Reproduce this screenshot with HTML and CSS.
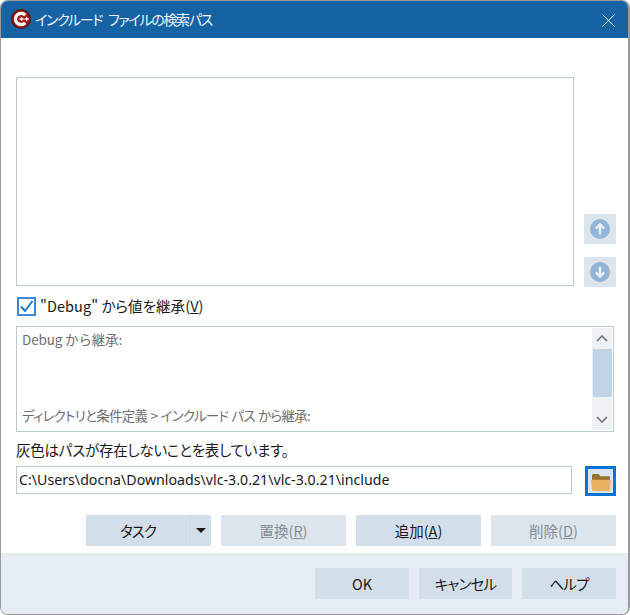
FILE: index.html
```html
<!DOCTYPE html>
<html lang="ja">
<head>
<meta charset="utf-8">
<title>インクルード ファイルの検索パス</title>
<link rel="stylesheet" href="styles.css">
</head>
<body>
<div class="window">
  <header class="titlebar">
    <svg class="appicon" width="20" height="20" viewBox="0 0 20 20">
      <circle cx="10" cy="10" r="10" fill="#5a1512"/>
      <circle cx="10" cy="10" r="8.6" fill="#a3201c"/>
      <path d="M14.2 6.2A5.6 5.6 0 1 0 14.2 13.8" fill="none" stroke="#fff" stroke-width="3.2"/>
      <path d="M8.6 10h4M10.6 8.2v3.6M13.6 10h4M15.6 8.2v3.6" stroke="#fff" stroke-width="1.3" fill="none"/>
    </svg>
    <span class="title">インクルード ファイルの検索パス</span>
    <svg class="close" width="13" height="13" viewBox="0 0 13 13"><path d="M.5.5l12 12M12.500.5l-12 12" stroke="#fff" stroke-width="1" fill="none"/></svg>
  </header>
  <main class="content">
    <div class="list-row">
      <div class="listbox"></div>
      <div class="arrows">
        <button class="arrow" type="button">
          <svg width="20" height="20" viewBox="0 0 20 20"><circle cx="10" cy="10" r="10" fill="#92b4d6"/><path d="M10 15.500V5.500M5.800 9.600L10 5.400l4.200 4.200" stroke="#e6eef6" stroke-width="2.400" fill="none"/></svg>
        </button>
        <button class="arrow" type="button">
          <svg width="20" height="20" viewBox="0 0 20 20"><circle cx="10" cy="10" r="10" fill="#92b4d6"/><path d="M10 4.500V14.500M5.800 10.400l4.200 4.200 4.200-4.200" stroke="#e6eef6" stroke-width="2.400" fill="none"/></svg>
        </button>
      </div>
    </div>
    <label class="inherit">
      <svg class="check" width="19" height="19" viewBox="0 0 19 19"><rect x="1" y="1" width="17" height="17" fill="#fff" stroke="#3a8ad6" stroke-width="2"/><path d="M4 9.500l4 4.500 7.500-10" fill="none" stroke="#1c78cc" stroke-width="2"/></svg>
      <span>"Debug" から値を継承(<u>V</u>)</span>
    </label>
    <div class="inherited">
      <div class="inherited-text">
        <div class="from-debug">Debug から継承:</div>
        <div class="from-dir">ディレクトリと条件定義 &gt; インクルード パス から継承:</div>
      </div>
      <div class="scrollbar">
        <svg width="12" height="7" viewBox="0 0 12 7"><path d="M1 6l5-5 5 5" fill="none" stroke="#6b6f74" stroke-width="1.500"/></svg>
        <div class="thumb"></div>
        <svg width="12" height="7" viewBox="0 0 12 7"><path d="M1 1l5 5 5-5" fill="none" stroke="#6b6f74" stroke-width="1.500"/></svg>
      </div>
    </div>
    <p class="note">灰色はパスが存在しないことを表しています。</p>
    <div class="path-row">
      <div class="pathinput">C:\Users\docna\Downloads\vlc-3.0.21\vlc-3.0.21\include</div>
      <button class="browse" type="button">
        <svg width="20" height="18" viewBox="0 0 21 19"><path d="M1 8V2.500L2 1h6l2 2.500h10V8z" fill="#9a7230"/><path d="M0 8.500Q0 7 1.500 7h18Q21 7 21 8.500l-1 9Q19.800 19 18.500 19h-16Q1.200 19 1 17.500z" fill="#e8b262"/></svg>
      </button>
    </div>
    <div class="actions">
      <div class="btn split"><span class="split-label">タスク</span><span class="caret"></span></div>
      <button class="btn off" type="button">置換(<u>R</u>)</button>
      <button class="btn" type="button">追加(<u>A</u>)</button>
      <button class="btn off" type="button">削除(<u>D</u>)</button>
    </div>
  </main>
  <footer class="footer">
    <button class="btn fbtn" type="button">OK</button>
    <button class="btn fbtn" type="button">キャンセル</button>
    <button class="btn fbtn" type="button">ヘルプ</button>
  </footer>
</div>
</body>
</html>
```
FILE: styles.css
```css
* { box-sizing: border-box; }
html, body { margin: 0; padding: 0; background: #fff; }
body {
  width: 630px;
  height: 615px;
  overflow: hidden;
  font-family: "Noto Sans CJK JP", "Noto Sans", sans-serif;
  font-size: 14px;
  font-feature-settings: "palt";
  color: #1a1a1a;
}
button { font: inherit; font-feature-settings: inherit; color: inherit; border: 0; padding: 0; margin: 0; }
.window {
  width: 630px;
  height: 615px;
  display: flex;
  flex-direction: column;
  background: #fff;
  border: 1px solid #9a9a9a;
  border-width: 1px 2px 1px 1px;
  border-radius: 8px;
  overflow: hidden;
}
.titlebar {
  height: 37px;
  flex: none;
  background: #1663a3;
  display: flex;
  align-items: center;
  padding-left: 10px;
  padding-right: 13px;
  color: #fff;
}
.appicon { flex: none; margin-right: 4px; margin-top: -1px; }
.title { flex: 1; font-size: 14px; line-height: 20px; color: #eef4fa; margin-top: -1px; letter-spacing: -1.3px; word-spacing: 4px; }
.close { flex: none; margin-top: 1px; }
.content {
  flex: 1;
  padding: 39px 12px 0 15px;
  display: flex;
  flex-direction: column;
}
.list-row { display: flex; height: 209px; flex: none; }
.listbox { width: 559px; border: 1px solid #b9c8d3; background: #fff; }
.arrows {
  display: flex;
  flex-direction: column;
  justify-content: flex-start;
  gap: 13px;
  margin-left: 10px;
  padding-top: 137px;
}
.arrow {
  width: 32px;
  height: 30px;
  background: #dce4ec;
  display: flex;
  align-items: center;
  justify-content: center;
  flex: none;
}
.inherit {
  display: flex;
  align-items: center;
  height: 20px;
  margin-top: 10px;
  padding-left: 1px;
  gap: 4px;
  font-size: 14.5px;
  line-height: 20px;
}
.inherit span { letter-spacing: 0.05px; }
.check { flex: none; }
.inherited {
  width: 598px;
  height: 106px;
  margin-top: 10px;
  border: 1px solid #b9c8d3;
  display: flex;
  flex: none;
}
.inherited-text {
  flex: 1;
  padding: 2px 0 6px 5px;
  display: flex;
  flex-direction: column;
  justify-content: space-between;
  font-size: 13.5px;
  line-height: 20px;
  color: #6f6f6f;
}
.from-debug { font-feature-settings: normal; letter-spacing: -0.15px; }
.from-dir { letter-spacing: -0.75px; word-spacing: 1px; }
.scrollbar {
  width: 20px;
  margin: 1px;
  background: #edf1f5;
  display: flex;
  flex-direction: column;
  align-items: center;
  justify-content: space-between;
  padding: 7px 0;
  position: relative;
}
.thumb {
  position: absolute;
  top: 21px;
  left: 1px;
  width: 19px;
  height: 48px;
  background: #c1d4e5;
}
.note {
  margin: 8px 0 0;
  font-size: 14.5px;
  line-height: 20px;
  height: 20px;
  letter-spacing: -0.25px;
}
.path-row { display: flex; margin-top: 6px; height: 30px; flex: none; }
.pathinput {
  width: 556px;
  height: 28px;
  border: 1px solid #b9c8d3;
  font-family: "Noto Sans", "Noto Sans CJK JP", sans-serif;
  font-size: 14.2px;
  line-height: 25px;
  padding-left: 2px;
  white-space: nowrap;
}
.browse {
  width: 31px;
  height: 30px;
  margin-left: 13px;
  background: #dce4ec;
  border: 3px solid #0a74d6;
  display: flex;
  align-items: center;
  justify-content: center;
}
.browse svg { margin-top: 1px; }
.actions {
  display: flex;
  justify-content: flex-end;
  gap: 10px;
  margin-top: 19px;
  flex: none;
}
.btn {
  width: 125px;
  height: 31px;
  background: #d2deea;
  display: flex;
  align-items: center;
  justify-content: center;
  font-size: 14.5px;
  line-height: 20px;
}
.off { background: #dde5ec; color: #858c92; }
.split { justify-content: flex-start; }
.split-label { width: 105px; text-align: center; border-right: 1px solid #c9d6e3; line-height: 31px; height: 31px; letter-spacing: -1px; }
.caret {
  width: 0;
  height: 0;
  margin-left: 5px;
  border-left: 5px solid transparent;
  border-right: 5px solid transparent;
  border-top: 5px solid #1a1a1a;
}
.footer {
  height: 61px;
  flex: none;
  background: #e5ecf4;
  display: flex;
  justify-content: flex-end;
  gap: 10px;
  padding: 15px 12px 0 0;
}
.fbtn { width: 94px; letter-spacing: -0.8px; }
.fbtn:first-child { letter-spacing: 0; }
.fbtn:nth-child(2) { width: 93px; }
```
